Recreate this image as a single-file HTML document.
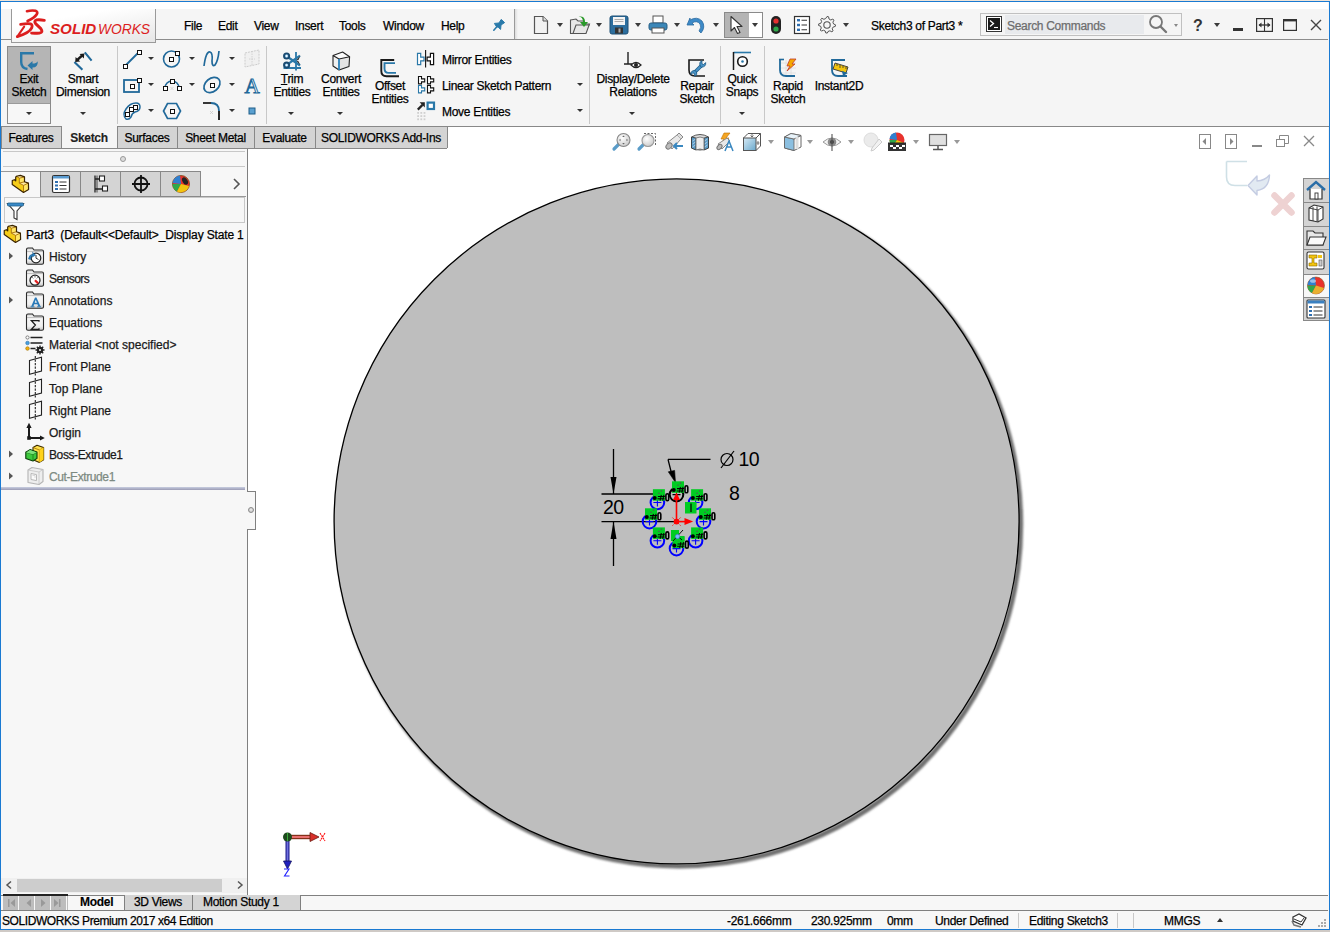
<!DOCTYPE html>
<html><head><meta charset="utf-8">
<style>
*{margin:0;padding:0;box-sizing:border-box}
html,body{width:1330px;height:932px;overflow:hidden;background:#f5f5f5;font-family:"Liberation Sans",sans-serif;font-size:11px;color:#1a1a1a}
.a{position:absolute}
.t{position:absolute;white-space:nowrap;line-height:1;color:#000;-webkit-text-stroke:0.25px currentColor}
.dd{position:absolute;width:0;height:0;border-left:3.5px solid transparent;border-right:3.5px solid transparent;border-top:4px solid #3a3a3a}
.sep{position:absolute;width:1px;background:#c8c8c8}
svg{position:absolute;overflow:visible}
</style></head><body>
<!-- window frame -->
<div class="a" style="left:0;top:0;width:1330px;height:1px;background:#efe4d8"></div>
<div class="a" style="left:0;top:930px;width:1330px;height:2px;background:#cfcac6"></div>
<div class="a" style="left:0;top:1px;width:1330px;height:929px;border:1px solid #1a7ad2"></div>
<!-- title bar -->
<div class="a" style="left:1px;top:2px;width:1327px;height:7px;background:#fff"></div>
<div class="a" style="left:1px;top:39px;width:1327px;height:1px;background:#8c8c8c"></div>

<!-- logo -->
<div class="a" style="left:11px;top:9px;width:145px;height:34px;border:1px solid #9a9a9a;border-top:none;background:linear-gradient(170deg,#ffffff 30%,#e6e6e6 100%)"></div>
<svg style="left:0;top:0" width="160" height="45" viewBox="0 0 160 45">
<g fill="none" stroke="#dc1e1e" stroke-linecap="round" stroke-linejoin="round">
<path d="M27 11.2 Q32 10 35.5 10.8 Q38.2 11.8 36.8 14.3 Q34.5 17.8 27.6 21" stroke-width="2.7"/>
<path d="M20.6 24.4 Q27.5 23.3 30.6 23.9 Q33 24.8 31.6 28.2 Q29.3 33 17.3 36.6" stroke-width="2.8"/>
<path d="M24.2 26.6 L17.3 36.6" stroke-width="2"/>
<path d="M44.3 20.4 Q39.5 19.3 36.6 19.9 Q33.6 20.8 35.6 23.6 L40.8 28.6 Q43.6 32.6 39.6 33 Q35.5 33.3 31.6 33.1" stroke-width="2.9"/>
</g>
<text x="50" y="33.6" font-family="Liberation Sans" font-weight="bold" font-style="italic" font-size="14.6" fill="#dc1e1e" textLength="46.3" lengthAdjust="spacingAndGlyphs">SOLID</text>
<text x="97.9" y="33.6" font-family="Liberation Sans" font-style="italic" font-size="14.6" fill="#dc1e1e" textLength="52.2" lengthAdjust="spacingAndGlyphs">WORKS</text>
</svg>
<!-- menu -->
<div class="t" style="left:184px;top:20px;font-size:12px;letter-spacing:-0.3px">File</div>
<div class="t" style="left:218px;top:20px;font-size:12px;letter-spacing:-0.3px">Edit</div>
<div class="t" style="left:254px;top:20px;font-size:12px;letter-spacing:-0.3px">View</div>
<div class="t" style="left:295px;top:20px;font-size:12px;letter-spacing:-0.3px">Insert</div>
<div class="t" style="left:339px;top:20px;font-size:12px;letter-spacing:-0.3px">Tools</div>
<div class="t" style="left:383px;top:20px;font-size:12px;letter-spacing:-0.3px">Window</div>
<div class="t" style="left:441px;top:20px;font-size:12px;letter-spacing:-0.3px">Help</div>
<svg style="left:490px;top:17px" width="16" height="16" viewBox="0 0 16 16"><path d="M11.2 2.4 L14.6 5.6 L11 8 L10.6 12.4 L8.2 10.2 L6.4 9.6 L4.4 6.4 L9 6Z" fill="#2a7aaa" stroke="#2a7aaa" stroke-width="1" stroke-linejoin="round"/><path d="M7.5 9 L3.8 13.2" stroke="#2a7aaa" stroke-width="1.6" stroke-linecap="round"/></svg>
<div class="a" style="left:514px;top:9px;width:4px;height:30px;background:linear-gradient(90deg,#9a9a9a 0,#9a9a9a 1px,#dcdcdc 1px,#f5f5f5 4px)"></div>
<!-- quick access icons -->
<svg style="left:533px;top:15px" width="16" height="20" viewBox="0 0 16 20"><path d="M1.5 1.5 H10 L14.5 6 V18.5 H1.5 Z" fill="#f2f2f2" stroke="#555" stroke-width="1.2"/><path d="M10 1.5 V6 H14.5" fill="#ddd" stroke="#555" stroke-width="1"/></svg>
<div class="dd" style="left:557px;top:23px"></div>
<svg style="left:569px;top:15px" width="22" height="20" viewBox="0 0 22 20"><path d="M1.5 5 L7 4 L9 6 L15 6 L16 9 L20.5 9 L17 18.5 H1.5 Z" fill="#e8e8e8" stroke="#555" stroke-width="1.1"/><path d="M4 18.5 L7 10 H20.5" fill="none" stroke="#555" stroke-width="1.1"/><path d="M8 2 Q14 1 14 7 L11 7 L15 12 L19 7 L16 7 Q16 0 8 2Z" fill="#2a9a2a"/></svg>
<div class="dd" style="left:596px;top:23px"></div>
<svg style="left:609px;top:15px" width="20" height="20" viewBox="0 0 20 20"><rect x="1" y="1" width="18" height="18" rx="2" fill="#2c6e9e" stroke="#1d4f74" stroke-width="1"/><rect x="4" y="2" width="12" height="8" fill="#f4f4f4"/><path d="M5.5 4.5h9M5.5 6.5h9" stroke="#999" stroke-width="0.8"/><rect x="6" y="12.5" width="8" height="6" fill="#333"/><rect x="9.5" y="13.5" width="2" height="4" fill="#aaa"/></svg>
<div class="dd" style="left:635px;top:23px"></div>
<svg style="left:648px;top:15px" width="20" height="20" viewBox="0 0 20 20"><rect x="5" y="1" width="10" height="7" fill="#fff" stroke="#555" stroke-width="1"/><rect x="1" y="8" width="18" height="7" rx="2" fill="#3b87b8" stroke="#285f85" stroke-width="1"/><rect x="4" y="13" width="12" height="5" fill="#fff" stroke="#555" stroke-width="1"/></svg>
<div class="dd" style="left:674px;top:23px"></div>
<svg style="left:686px;top:15px" width="20" height="20" viewBox="0 0 20 20"><path d="M4 3 L1 10 L8 10 L6 8 Q11 5 14 9 Q16 12 13 16 L15 18 Q20 12 16 6 Q11 1 4 5 Z" fill="#3d8ac8" stroke="#2a6aa0" stroke-width="0.8"/></svg>
<div class="dd" style="left:713px;top:23px"></div>
<div class="a" style="left:724px;top:12px;width:39px;height:26px;border:1px solid #8a8a8a;background:#fff"></div>
<div class="a" style="left:725px;top:13px;width:24px;height:24px;background:#b4b4b4"></div>
<svg style="left:729px;top:15px" width="16" height="20" viewBox="0 0 16 20"><path d="M2 1.5 L2 16 L5.5 12.5 L8.5 18.5 L11 17.5 L8 11.5 L13 11.5 Z" fill="#fff" stroke="#333" stroke-width="1.1" stroke-linejoin="round"/></svg>
<div class="dd" style="left:752px;top:23px"></div>
<svg style="left:769px;top:15px" width="14" height="20" viewBox="0 0 14 20"><rect x="2" y="1" width="10" height="18" rx="5" fill="#222"/><circle cx="7" cy="6" r="2.6" fill="#e53030"/><circle cx="7" cy="14" r="2.6" fill="#2ea84a"/></svg>
<svg style="left:793px;top:15px" width="18" height="20" viewBox="0 0 18 20"><rect x="1.5" y="1.5" width="15" height="17" fill="#fff" stroke="#333" stroke-width="1.2"/><rect x="4" y="4" width="3" height="2.4" fill="#2f6fb0"/><rect x="4" y="8.8" width="3" height="2.4" fill="#2f6fb0"/><rect x="4" y="13.6" width="3" height="2.4" fill="#2f6fb0"/><path d="M8.5 5.2h5.5M8.5 10h5.5M8.5 14.8h5.5" stroke="#333" stroke-width="1.1"/></svg>
<svg style="left:818px;top:16px" width="18" height="18" viewBox="0 0 18 18"><path d="M9 1.5 L10.6 1.8 L11 4 L12.8 5 L14.8 4 L15.9 5.2 L14.9 7.2 L15.6 9 L17.5 9.8 L17.3 11.4 L15.2 12 L14.2 13.8 L15.1 15.8 L13.9 16.8 L11.9 15.8 L10 16.5 L9.4 18 L7.8 18 L7.2 16 L5.4 15.2 L3.4 16.1 L2.3 15 L3.3 13 L2.6 11.2 L0.6 10.5 L0.7 8.9 L2.8 8.3 L3.6 6.4 L2.7 4.4 L3.9 3.3 L5.9 4.3 L7.7 3.5 Z" transform="translate(0,-1)" fill="none" stroke="#555" stroke-width="1"/><circle cx="9" cy="9" r="3.2" fill="none" stroke="#555" stroke-width="1.1"/></svg>
<div class="dd" style="left:843px;top:23px"></div>
<div class="t" style="left:871px;top:20px;font-size:12px;letter-spacing:-0.3px">Sketch3 of Part3 *</div>
<!-- search -->
<div class="a" style="left:980px;top:13px;width:202px;height:23px;border:1px solid #c0c0c0;background:#f5f5f5"></div>
<div class="a" style="left:1005px;top:15px;width:139px;height:19px;background:#e8eaed"></div>
<svg style="left:986px;top:16px" width="16" height="16" viewBox="0 0 16 16"><rect x="0.5" y="0.5" width="15" height="15" fill="#fff" stroke="#333"/><rect x="2" y="2" width="12" height="12" fill="#1a1a1a"/><path d="M4 4.5 L7.5 7.5 L4 10.5" fill="none" stroke="#fff" stroke-width="1.3"/><path d="M8 11.5h4" stroke="#fff" stroke-width="1.1"/></svg>
<div class="t" style="left:1007px;top:20px;font-size:12px;letter-spacing:-0.3px;color:#6d6d6d">Search Commands</div>
<svg style="left:1148px;top:14px" width="20" height="20" viewBox="0 0 20 20"><circle cx="8" cy="8" r="6" fill="none" stroke="#777" stroke-width="1.8"/><path d="M12.5 12.5 L18 18" stroke="#777" stroke-width="2.4" stroke-linecap="round"/></svg>
<div class="a" style="left:1174px;top:24px;width:0;height:0;border-left:2.5px solid transparent;border-right:2.5px solid transparent;border-top:3px solid #888"></div>
<div class="t" style="left:1193px;top:18px;font-size:16px;font-weight:bold;color:#333;-webkit-text-stroke:0">?</div>
<div class="dd" style="left:1214px;top:23px"></div>
<div class="a" style="left:1233px;top:28px;width:10px;height:3px;background:#333"></div>
<svg style="left:1256px;top:18px" width="17" height="14" viewBox="0 0 17 14"><rect x="0.6" y="0.6" width="15.8" height="12.8" fill="none" stroke="#333" stroke-width="1.2"/><path d="M8.5 1v12" stroke="#333" stroke-width="1.1"/><path d="M3 7h11" stroke="#333" stroke-width="1.3"/><path d="M2.5 7 L5.5 4.5 V9.5Z M14.5 7 L11.5 4.5 V9.5Z" fill="#333"/></svg>
<svg style="left:1283px;top:19px" width="14" height="12" viewBox="0 0 14 12"><rect x="0.6" y="0.6" width="12.8" height="10.8" fill="none" stroke="#333" stroke-width="1.2"/><rect x="0" y="0" width="14" height="2.4" fill="#333"/></svg>
<svg style="left:1310px;top:19px" width="12" height="12" viewBox="0 0 12 12"><path d="M1 1L11 11M11 1L1 11" stroke="#444" stroke-width="1.4"/></svg>

<!-- ribbon -->
<div class="a" style="left:7px;top:46px;width:44px;height:78px;border:1px solid #8a8a8a;background:#f7f7f7"></div>
<div class="a" style="left:8px;top:47px;width:42px;height:57px;background:#b5b5b5;border-bottom:1px solid #9a9a9a"></div>
<svg style="left:19px;top:51px" width="20" height="20" viewBox="0 0 20 20"><path d="M15 2.2 H2.2 V11 Q2.2 17 8.5 18" fill="none" stroke="#2a78a8" stroke-width="2.4"/><path d="M8.5 14.5 L13.5 10 L13.5 12.5 Q17.5 12.5 18.8 10.2 Q19 16.5 13.5 16.5 L13.5 19 Z" fill="#2a78a8"/></svg>
<div class="t" style="left:-31px;top:73px;width:120px;text-align:center;font-size:12px;letter-spacing:-0.3px">Exit</div>
<div class="t" style="left:-31px;top:86px;width:120px;text-align:center;font-size:12px;letter-spacing:-0.3px">Sketch</div>
<div class="dd" style="left:26px;top:112px;border-left-width:3px;border-right-width:3px;border-top-width:3.5px;border-top-color:#333"></div>
<svg style="left:73px;top:51px" width="20" height="20" viewBox="0 0 20 20"><path d="M11.8 1.4 L18.6 9.6 M1.4 11 L9.4 18.8" stroke="#21699a" stroke-width="2.1"/><path d="M4.6 8.6 L9 4.6" stroke="#1a1a1a" stroke-width="2.6"/><path d="M2.2 11 L2.6 6 L7.2 10.4Z M11.4 2.6 L6.6 3 L10.8 7.4Z" fill="#1a1a1a"/></svg>
<div class="t" style="left:23px;top:73px;width:120px;text-align:center;font-size:12px;letter-spacing:-0.3px">Smart</div>
<div class="t" style="left:23px;top:86px;width:120px;text-align:center;font-size:12px;letter-spacing:-0.3px">Dimension</div>
<div class="dd" style="left:80px;top:112px;border-left-width:3px;border-right-width:3px;border-top-width:3.5px;border-top-color:#333"></div>
<div class="sep" style="left:117px;top:46px;height:78px"></div>
<svg style="left:122px;top:49px" width="20" height="20" viewBox="0 0 20 20"><path d="M3 17 L17 3" stroke="#21699a" stroke-width="1.8"/><rect x="1.5" y="15.5" width="4" height="4" fill="#fff" stroke="#111" stroke-width="1"/><rect x="15.5" y="1.5" width="4" height="4" fill="#fff" stroke="#111" stroke-width="1"/></svg>
<svg style="left:162px;top:49px" width="20" height="20" viewBox="0 0 20 20"><circle cx="9.5" cy="10" r="8" fill="none" stroke="#21699a" stroke-width="1.6"/><rect x="7.5" y="8.5" width="4" height="4" fill="#fff" stroke="#111" stroke-width="1"/><rect x="13.5" y="2.5" width="4" height="4" fill="#fff" stroke="#111" stroke-width="1"/></svg>
<svg style="left:202px;top:49px" width="20" height="20" viewBox="0 0 20 20"><path d="M2 17 Q4 2 8 3 Q11 4 10 12 Q10 18 13 16 Q16 12 17 2" fill="none" stroke="#21699a" stroke-width="1.7"/></svg>
<svg style="left:242px;top:49px" width="20" height="20" viewBox="0 0 20 20"><path d="M3 4 L17 1 L17 15 L3 18 Z" fill="#f0f0f0" stroke="#ccc" stroke-width="1" stroke-dasharray="2 1"/><path d="M10 2 V17 M7 10 h6" stroke="#ccc" stroke-width="0.8" stroke-dasharray="1.5 1"/></svg>
<svg style="left:122px;top:75px" width="20" height="20" viewBox="0 0 20 20"><rect x="2" y="5" width="15" height="12" fill="none" stroke="#21699a" stroke-width="1.8"/><rect x="8.5" y="9.5" width="4" height="4" fill="#fff" stroke="#111" stroke-width="1"/><rect x="15.5" y="3.5" width="4" height="4" fill="#fff" stroke="#111" stroke-width="1"/></svg>
<svg style="left:162px;top:75px" width="20" height="20" viewBox="0 0 20 20"><path d="M3 13 A7 7 0 0 1 17 13" fill="none" stroke="#21699a" stroke-width="1.6"/><rect x="8.5" y="4.5" width="4" height="4" fill="#fff" stroke="#111" stroke-width="1"/><rect x="1.5" y="11.5" width="4" height="4" fill="#fff" stroke="#111" stroke-width="1"/><rect x="15.5" y="11.5" width="4" height="4" fill="#fff" stroke="#111" stroke-width="1"/><path d="M8.5 12 l3 3 M11.5 12 l-3 3" stroke="#ccc" stroke-width="0.8"/></svg>
<svg style="left:202px;top:75px" width="20" height="20" viewBox="0 0 20 20"><ellipse cx="10" cy="10" rx="9" ry="6.5" transform="rotate(-40 10 10)" fill="none" stroke="#21699a" stroke-width="1.7"/><rect x="8.5" y="8.5" width="4" height="4" fill="#fff" stroke="#111" stroke-width="1"/></svg>
<svg style="left:242px;top:75px" width="20" height="20" viewBox="0 0 20 20"><text x="10" y="17.6" font-family="Liberation Serif" font-size="21" text-anchor="middle" fill="#fff" stroke="#21699a" stroke-width="1">A</text></svg>
<svg style="left:122px;top:101px" width="20" height="20" viewBox="0 0 20 20"><path d="M4 18 Q0 14 4 8 Q8 2 14 2 Q18 2 18 6 Q18 10 13 11 Q10 12 9 16 Q7 19 4 18Z" fill="none" stroke="#21699a" stroke-width="1.5"/><rect x="3.5" y="11.5" width="4" height="4" fill="#fff" stroke="#111" stroke-width="1"/><rect x="7.5" y="6.5" width="4" height="4" fill="#fff" stroke="#111" stroke-width="1"/><rect x="11.5" y="4.5" width="4" height="4" fill="#fff" stroke="#111" stroke-width="1"/></svg>
<svg style="left:162px;top:101px" width="20" height="20" viewBox="0 0 20 20"><path d="M5.5 2.5 H14.5 L18.5 10 L14.5 17.5 H5.5 L1.5 10 Z" fill="none" stroke="#21699a" stroke-width="1.7"/><rect x="8.5" y="8.5" width="4" height="4" fill="#fff" stroke="#111" stroke-width="1"/></svg>
<svg style="left:202px;top:101px" width="20" height="20" viewBox="0 0 20 20"><path d="M1 2 H9" stroke="#222" stroke-width="1.8"/><path d="M9 2 Q17 2 17 10" fill="none" stroke="#21699a" stroke-width="1.8"/><path d="M17 10 V19" stroke="#111" stroke-width="1.8"/><path d="M8 10 l3 3 M11 10 l-3 3" stroke="#ccc" stroke-width="0.8"/></svg>
<svg style="left:242px;top:101px" width="20" height="20" viewBox="0 0 20 20"><rect x="7" y="7" width="6" height="6" fill="#5aa0d0" stroke="#1f5f8a" stroke-width="1"/></svg>
<div class="dd" style="left:148px;top:57px;border-left-width:3px;border-right-width:3px;border-top-width:3.5px;border-top-color:#333"></div>
<div class="dd" style="left:189px;top:57px;border-left-width:3px;border-right-width:3px;border-top-width:3.5px;border-top-color:#333"></div>
<div class="dd" style="left:229px;top:57px;border-left-width:3px;border-right-width:3px;border-top-width:3.5px;border-top-color:#333"></div>
<div class="dd" style="left:148px;top:83px;border-left-width:3px;border-right-width:3px;border-top-width:3.5px;border-top-color:#333"></div>
<div class="dd" style="left:189px;top:83px;border-left-width:3px;border-right-width:3px;border-top-width:3.5px;border-top-color:#333"></div>
<div class="dd" style="left:229px;top:83px;border-left-width:3px;border-right-width:3px;border-top-width:3.5px;border-top-color:#333"></div>
<div class="dd" style="left:148px;top:109px;border-left-width:3px;border-right-width:3px;border-top-width:3.5px;border-top-color:#333"></div>
<div class="dd" style="left:229px;top:109px;border-left-width:3px;border-right-width:3px;border-top-width:3.5px;border-top-color:#333"></div>
<div class="sep" style="left:266px;top:46px;height:78px"></div>
<svg style="left:282px;top:51px" width="20" height="20" viewBox="0 0 20 20"><path d="M6.5 6.5 L18 14.5 M6.5 12.6 L18 4.6" stroke="#2a78a8" stroke-width="2.2"/><path d="M14 9.6 L18.5 4.5 L16.5 9Z M14 9.6 L18.5 14.6 L16.5 10.2Z" fill="#333"/><path d="M14 1 V19.5 M1.5 17 H19" stroke="#2a78a8" stroke-width="1.8"/><circle cx="4.6" cy="5" r="2.6" fill="#8ec4ea" stroke="#1a4a70" stroke-width="1.9"/><circle cx="4.6" cy="14.1" r="2.6" fill="#8ec4ea" stroke="#1a4a70" stroke-width="1.9"/><circle cx="4.6" cy="5" r="0.9" fill="#fff"/><circle cx="4.6" cy="14.1" r="0.9" fill="#fff"/></svg>
<div class="t" style="left:232px;top:73px;width:120px;text-align:center;font-size:12px;letter-spacing:-0.3px"><u style="text-decoration-thickness:1px">T</u>rim</div>
<div class="t" style="left:232px;top:86px;width:120px;text-align:center;font-size:12px;letter-spacing:-0.3px">Entities</div>
<div class="dd" style="left:288px;top:112px;border-left-width:3px;border-right-width:3px;border-top-width:3.5px;border-top-color:#333"></div>
<svg style="left:331px;top:51px" width="20" height="20" viewBox="0 0 20 20"><path d="M11.6 1 L2 4.5 L2 15 L8 19 L18 15.5 L18.6 5.8Z" fill="#f0f0f0"/><path d="M11.6 1 L2 4.5 L8 8 L18.6 5.8Z" fill="#fafafa"/><path d="M8 8 L18.6 5.8 L18 15.5 L8 19Z" fill="#e4e4e4"/><path d="M11.6 1 L2 4.5 L2 15 L8 19 L18 15.5 L18.6 5.8Z M2 4.5 L8 8 L18.6 5.8" fill="none" stroke="#222" stroke-width="1.1" stroke-linejoin="round"/><path d="M8 8 V19" stroke="#2a80b8" stroke-width="1.8"/></svg>
<div class="t" style="left:281px;top:73px;width:120px;text-align:center;font-size:12px;letter-spacing:-0.3px">Convert</div>
<div class="t" style="left:281px;top:86px;width:120px;text-align:center;font-size:12px;letter-spacing:-0.3px">Entities</div>
<div class="dd" style="left:337px;top:112px;border-left-width:3px;border-right-width:3px;border-top-width:3.5px;border-top-color:#333"></div>
<svg style="left:380px;top:58px" width="20" height="20" viewBox="0 0 20 20"><path d="M14.2 2 H1.3 V13 Q1.3 18.2 6.5 18.2 H19" fill="none" stroke="#1a1a1a" stroke-width="1.9"/><path d="M15 5.1 H4.5 V10.5 Q4.5 14.9 8.5 14.9 H16" fill="none" stroke="#2a78a8" stroke-width="1.9"/></svg>
<div class="t" style="left:330px;top:80px;width:120px;text-align:center;font-size:12px;letter-spacing:-0.3px">Offset</div>
<div class="t" style="left:330px;top:93px;width:120px;text-align:center;font-size:12px;letter-spacing:-0.3px">Entities</div>
<svg style="left:416px;top:50px" width="20" height="20" viewBox="0 0 20 20"><path transform="translate(1.5 3.4)" d="M0 0 H3.2 V3.8 H6.5 V7.4 H3.2 V11.2 H0Z" fill="#fff" stroke="#2a78a8" stroke-width="1.2"/><path d="M9.6 0 V17.5" stroke="#111" stroke-width="1.1"/><path transform="translate(17.6 3.4) scale(-1 1)" d="M0 0 H3.2 V3.8 H6.5 V7.4 H3.2 V11.2 H0Z" fill="#fff" stroke="#111" stroke-width="1.2"/></svg>
<div class="t" style="left:442px;top:54px;font-size:12px;letter-spacing:-0.3px">Mirror Entities</div>
<svg style="left:416px;top:75px" width="20" height="20" viewBox="0 0 20 20"><path transform="translate(2.5 1.5)" d="M0 0 H3 V2.4 H6.2 V5.4 H3 V7.4 H0Z" fill="#fff" stroke="#111" stroke-width="1.1"/><path transform="translate(11.5 1.5)" d="M0 0 H3 V2.4 H6.2 V5.4 H3 V7.4 H0Z" fill="#fff" stroke="#111" stroke-width="1.1"/><path transform="translate(2.5 10.5)" d="M0 0 H3 V2.4 H6.2 V5.4 H3 V7.4 H0Z" fill="#fff" stroke="#2a78a8" stroke-width="1.1"/><path transform="translate(11.5 10.5)" d="M0 0 H3 V2.4 H6.2 V5.4 H3 V7.4 H0Z" fill="#fff" stroke="#111" stroke-width="1.1"/></svg>
<div class="t" style="left:442px;top:80px;font-size:12px;letter-spacing:-0.3px">Linear Sketch Pattern</div>
<svg style="left:416px;top:101px" width="20" height="20" viewBox="0 0 20 20"><path d="M1.8 8.6 L6.5 3.9" stroke="#222" stroke-width="2.2"/><path d="M3.6 1.2 H8.8 V6.4Z" fill="#222"/><rect x="11.6" y="1.6" width="6.4" height="6.4" fill="#fff" stroke="#2a78a8" stroke-width="2.2"/><g fill="#d0d0d0"><rect x="1.2" y="11" width="1.8" height="1.8"/><rect x="4.4" y="11" width="1.8" height="1.8"/><rect x="7.6" y="11" width="1.8" height="1.8"/><rect x="1.2" y="14.2" width="1.8" height="1.8"/><rect x="4.4" y="14.2" width="1.8" height="1.8"/><rect x="7.6" y="14.2" width="1.8" height="1.8"/><rect x="1.2" y="17.4" width="1.8" height="1.8"/><rect x="4.4" y="17.4" width="1.8" height="1.8"/><rect x="7.6" y="17.4" width="1.8" height="1.8"/></g></svg>
<div class="t" style="left:442px;top:106px;font-size:12px;letter-spacing:-0.3px">Move Entities</div>
<div class="dd" style="left:577px;top:83px;border-left-width:3px;border-right-width:3px;border-top-width:3.5px;border-top-color:#333"></div>
<div class="dd" style="left:577px;top:109px;border-left-width:3px;border-right-width:3px;border-top-width:3.5px;border-top-color:#333"></div>
<div class="sep" style="left:589px;top:46px;height:78px"></div>
<svg style="left:623px;top:51px" width="20" height="20" viewBox="0 0 20 20"><path d="M5 1 V13 M1 13 H9" stroke="#222" stroke-width="1.4"/><path d="M8 14 Q13 9 18 14 Q13 19 8 14Z" fill="#fff" stroke="#222" stroke-width="1.2"/><circle cx="13" cy="14" r="2" fill="#222"/></svg>
<div class="t" style="left:573px;top:73px;width:120px;text-align:center;font-size:12px;letter-spacing:-0.3px">Display/Delete</div>
<div class="t" style="left:573px;top:86px;width:120px;text-align:center;font-size:12px;letter-spacing:-0.3px">Relations</div>
<div class="dd" style="left:629px;top:112px;border-left-width:3px;border-right-width:3px;border-top-width:3.5px;border-top-color:#333"></div>
<svg style="left:687px;top:58px" width="20" height="20" viewBox="0 0 20 20"><path d="M17 2 H2 V12 Q2 18 8 18 H18" fill="none" stroke="#1a1a1a" stroke-width="1.6"/><path d="M8.5 13.5 L14 8" stroke="#1f5f8a" stroke-width="3.6" stroke-linecap="round"/><path d="M8.5 13.5 L14 8" stroke="#4a94c8" stroke-width="2" stroke-linecap="round"/><path d="M13.5 8.5 Q11.5 4 15 2.8 L14.8 5.6 L16.6 6.6 L18.6 4.6 Q19.4 8.6 14.5 9.2Z" fill="#4a94c8" stroke="#1f5f8a" stroke-width="0.9"/><path d="M9 13 Q11 17.5 7.5 18 L7.8 15.8 L5.8 14.8 L4 16.6 Q3.4 12.5 8 12.5Z" fill="#4a94c8" stroke="#1f5f8a" stroke-width="0.9"/></svg>
<div class="t" style="left:637px;top:80px;width:120px;text-align:center;font-size:12px;letter-spacing:-0.3px">Repair</div>
<div class="t" style="left:637px;top:93px;width:120px;text-align:center;font-size:12px;letter-spacing:-0.3px">Sketch</div>
<div class="sep" style="left:720px;top:46px;height:78px"></div>
<svg style="left:732px;top:51px" width="20" height="20" viewBox="0 0 20 20"><path d="M1.5 1.5 H19" stroke="#2a78a8" stroke-width="1.6"/><path d="M1.5 1 V19" stroke="#1a1a1a" stroke-width="1.5"/><circle cx="10.5" cy="10.5" r="4.8" fill="#fff" stroke="#1a1a1a" stroke-width="1.6"/><circle cx="10.5" cy="10.5" r="1.3" fill="#2a78a8"/></svg>
<div class="t" style="left:682px;top:73px;width:120px;text-align:center;font-size:12px;letter-spacing:-0.3px">Quick</div>
<div class="t" style="left:682px;top:86px;width:120px;text-align:center;font-size:12px;letter-spacing:-0.3px">Snaps</div>
<div class="dd" style="left:739px;top:112px;border-left-width:3px;border-right-width:3px;border-top-width:3.5px;border-top-color:#333"></div>
<div class="sep" style="left:764px;top:46px;height:78px"></div>
<svg style="left:778px;top:58px" width="20" height="20" viewBox="0 0 20 20"><path d="M3 5h15M3 10h15M3 15h15M8 2v16M13 2v16" stroke="#ddd" stroke-width="0.8"/><path d="M2 2 V12 Q2 18 8 18 H17" fill="none" stroke="#21699a" stroke-width="1.8"/><path d="M1 1.5 H6" stroke="#21699a" stroke-width="1.6"/><path d="M12 1 L18 1 L14 6 L17 6 L9 13 L12 8 L9 8 Z" fill="#f5a800" stroke="#c0392b" stroke-width="0.8"/></svg>
<div class="t" style="left:728px;top:80px;width:120px;text-align:center;font-size:12px;letter-spacing:-0.3px">Rapid</div>
<div class="t" style="left:728px;top:93px;width:120px;text-align:center;font-size:12px;letter-spacing:-0.3px">Sketch</div>
<svg style="left:830px;top:58px" width="20" height="20" viewBox="0 0 20 20"><path d="M15 2 H2 V12 Q2 18 8 18 H17" fill="none" stroke="#21699a" stroke-width="1.8"/><path d="M5 5 L18 9 L16 15 L3 11Z" fill="#f1c40f" stroke="#333" stroke-width="0.9"/><path d="M7 6v2M10 7v3M13 8v2M16 9v2" stroke="#333" stroke-width="0.8"/><path d="M12 13 L18 15 L13 18Z" fill="#21699a"/></svg>
<div class="t" style="left:779px;top:80px;width:120px;text-align:center;font-size:12px;letter-spacing:-0.3px">Instant2D</div>
<!-- ribbon bottom -->
<div class="a" style="left:1px;top:126px;width:1328px;height:1px;background:#888"></div>
<div class="a" style="left:248px;top:127px;width:1080px;height:766px;background:#fff"></div>
<div class="a" style="left:1px;top:127px;width:247px;height:22px;background:#f5f5f5"></div>
<div class="a" style="left:1px;top:148px;width:446px;height:1px;background:#888"></div>
<div class="a" style="left:1px;top:127px;width:61px;height:21px;background:#d4d4d4;border-left:1px solid #888;border-right:1px solid #888"></div>
<div class="t" style="left:1px;top:132px;width:60px;text-align:center;font-size:12px;letter-spacing:-0.3px">Features</div>
<div class="a" style="left:61px;top:126px;width:57px;height:22px;background:#f5f5f5;border-left:1px solid #888;border-right:1px solid #888"></div>
<div class="t" style="left:61px;top:132px;width:56px;text-align:center;font-weight:bold;-webkit-text-stroke:0.12px currentColor;font-size:12px;letter-spacing:-0.3px;color:#222">Sketch</div>
<div class="a" style="left:117px;top:127px;width:61px;height:21px;background:#d4d4d4;border-left:1px solid #888;border-right:1px solid #888"></div>
<div class="t" style="left:117px;top:132px;width:60px;text-align:center;font-size:12px;letter-spacing:-0.3px">Surfaces</div>
<div class="a" style="left:177px;top:127px;width:78px;height:21px;background:#d4d4d4;border-left:1px solid #888;border-right:1px solid #888"></div>
<div class="t" style="left:177px;top:132px;width:77px;text-align:center;font-size:12px;letter-spacing:-0.3px">Sheet Metal</div>
<div class="a" style="left:254px;top:127px;width:62px;height:21px;background:#d4d4d4;border-left:1px solid #888;border-right:1px solid #888"></div>
<div class="t" style="left:254px;top:132px;width:61px;text-align:center;font-size:12px;letter-spacing:-0.3px">Evaluate</div>
<div class="a" style="left:315px;top:127px;width:133px;height:21px;background:#d4d4d4;border-left:1px solid #888;border-right:1px solid #888"></div>
<div class="t" style="left:315px;top:132px;width:132px;text-align:center;font-size:12px;letter-spacing:-0.3px">SOLIDWORKS Add-Ins</div>
<div class="a" style="left:1px;top:149px;width:246px;height:744px;background:#f7f7f7"></div>
<div class="a" style="left:3px;top:151px;width:242px;height:1px;background:#c8c8c8"></div>
<div class="a" style="left:120px;top:156px;width:6px;height:6px;border-radius:50%;border:1px solid #999;background:#ddd"></div>
<div class="a" style="left:3px;top:166px;width:242px;height:1px;background:#c8c8c8"></div>
<div class="a" style="left:1px;top:196px;width:245px;height:1px;background:#999"></div>
<div class="a" style="left:1px;top:171px;width:40px;height:26px;background:#f7f7f7;border-top:1px solid #999;border-right:1px solid #999"></div>
<div class="a" style="left:40px;top:171px;width:41px;height:26px;background:#d4d4d4;border:1px solid #888"></div>
<div class="a" style="left:80px;top:171px;width:41px;height:26px;background:#d4d4d4;border:1px solid #888"></div>
<div class="a" style="left:120px;top:171px;width:41px;height:26px;background:#d4d4d4;border:1px solid #888"></div>
<div class="a" style="left:160px;top:171px;width:41px;height:26px;background:#d4d4d4;border:1px solid #888"></div>
<svg style="left:11px;top:174px" width="20" height="20" viewBox="0 0 20 20"><path d="M1.25 6.5 L3.4 5.7 L4.7 6.9 V3.2 L5.5 2.25 L9.4 1.35 L13.5 2.9 V7.8 L17.4 9.1 L17.6 15.5 L12.5 18.4 L1.25 10.6Z" fill="#f5cc18"/><path d="M8.3 4.2 L13.5 2.9 V7.8 L8.3 9.1Z M12.5 11.4 L17.4 9.1 L17.6 15.5 L12.5 18.4Z" fill="#ffe566"/><path d="M5.5 2.25 L9.4 1.35 L13.5 2.9 L8.3 4.2Z M8.3 9.1 L13.5 7.8 L17.4 9.1 L12.5 11.4Z" fill="#ffeaa0"/><path d="M5.5 2.25 L8.3 4.2 L13.5 2.9 M8.3 4.2 V9.1 L12.5 11.4 V18.4 M12.5 11.4 L17.4 9.1 M8.3 9.1 L13.5 7.8" stroke="#a8700c" stroke-width="0.9" fill="none"/><path d="M1.25 6.5 L3.4 5.7 L4.7 6.9 V3.2 L5.5 2.25 L9.4 1.35 L13.5 2.9 V7.8 L17.4 9.1 L17.6 15.5 L12.5 18.4 L1.25 10.6Z" fill="none" stroke="#3a2400" stroke-width="1.2" stroke-linejoin="round"/></svg>
<svg style="left:51px;top:174px" width="20" height="20" viewBox="0 0 20 20"><rect x="1.5" y="1.5" width="17" height="17" rx="1.5" fill="#fff" stroke="#333" stroke-width="1.2"/><rect x="2" y="2" width="16" height="2.5" fill="#5a9bd0"/><rect x="4" y="7" width="3" height="2" fill="#2f6fb0"/><rect x="4" y="10.5" width="3" height="2" fill="#2f6fb0"/><rect x="4" y="14" width="3" height="2" fill="#2f6fb0"/><path d="M8.5 8h7M8.5 11.5h7M8.5 15h7" stroke="#333" stroke-width="1"/></svg>
<svg style="left:91px;top:174px" width="20" height="20" viewBox="0 0 20 20"><path d="M4 1.5 V18.5 M4 5 H10 M4 15 H12" stroke="#222" stroke-width="1.3" fill="none"/><rect x="8.5" y="2" width="5" height="5" fill="#fff" stroke="#222" stroke-width="1.1"/><rect x="11.5" y="12" width="5" height="5" fill="#fff" stroke="#222" stroke-width="1.1"/><path d="M6 1.5v17" stroke="#222" stroke-width="0.8"/></svg>
<svg style="left:131px;top:174px" width="20" height="20" viewBox="0 0 20 20"><circle cx="10" cy="10" r="6.5" fill="none" stroke="#111" stroke-width="1.8"/><path d="M10 1 V19 M1 10 H19" stroke="#111" stroke-width="1.8"/></svg>
<svg style="left:171px;top:174px" width="20" height="20" viewBox="0 0 20 20"><circle cx="10" cy="10" r="8.5" fill="#e8322d" stroke="#7a4a10" stroke-width="0.8"/><path d="M10 10 L1.5 9 A8.5 8.5 0 0 1 9 1.5Z" fill="#2f80d0"/><path d="M10 10 L1.5 10 A8.5 8.5 0 0 0 6 17.5Z" fill="#2fa84a"/><path d="M10 10 L6 17.5 A8.5 8.5 0 0 0 18 12 Z" fill="#f2c40f"/><ellipse cx="14" cy="7" rx="2.5" ry="4" transform="rotate(-30 14 7)" fill="#222"/></svg>
<svg style="left:232px;top:178px" width="10" height="12" viewBox="0 0 10 12"><path d="M2 1 L7 6 L2 11" fill="none" stroke="#555" stroke-width="1.6"/></svg>
<div class="a" style="left:4px;top:197px;width:241px;height:26px;border:1px solid #c8c8c8;background:#f7f7f7"></div>
<svg style="left:6px;top:201px" width="20" height="20" viewBox="0 0 20 20"><path d="M1.5 2.5 H17.5 L11 10 V18.5 L8 17 V10 Z" fill="#fff" stroke="#333" stroke-width="1.1"/><rect x="1.5" y="2" width="16" height="3" rx="1" fill="#3a8ac8" stroke="#1f5f8a" stroke-width="0.8"/></svg>
<svg style="left:3px;top:224px" width="20" height="20" viewBox="0 0 20 20"><path d="M1.25 6.5 L3.4 5.7 L4.7 6.9 V3.2 L5.5 2.25 L9.4 1.35 L13.5 2.9 V7.8 L17.4 9.1 L17.6 15.5 L12.5 18.4 L1.25 10.6Z" fill="#f5cc18"/><path d="M8.3 4.2 L13.5 2.9 V7.8 L8.3 9.1Z M12.5 11.4 L17.4 9.1 L17.6 15.5 L12.5 18.4Z" fill="#ffe566"/><path d="M5.5 2.25 L9.4 1.35 L13.5 2.9 L8.3 4.2Z M8.3 9.1 L13.5 7.8 L17.4 9.1 L12.5 11.4Z" fill="#ffeaa0"/><path d="M5.5 2.25 L8.3 4.2 L13.5 2.9 M8.3 4.2 V9.1 L12.5 11.4 V18.4 M12.5 11.4 L17.4 9.1 M8.3 9.1 L13.5 7.8" stroke="#a8700c" stroke-width="0.9" fill="none"/><path d="M1.25 6.5 L3.4 5.7 L4.7 6.9 V3.2 L5.5 2.25 L9.4 1.35 L13.5 2.9 V7.8 L17.4 9.1 L17.6 15.5 L12.5 18.4 L1.25 10.6Z" fill="none" stroke="#3a2400" stroke-width="1.2" stroke-linejoin="round"/></svg>
<div class="t" style="left:26px;top:229px;font-size:12px;letter-spacing:-0.15px">Part3&nbsp; (Default&lt;&lt;Default&gt;_Display State 1</div>
<svg style="left:8px;top:252px" width="6" height="8" viewBox="0 0 6 8"><path d="M1 0.5 L5 4 L1 7.5Z" fill="#555"/></svg>
<svg style="left:25px;top:247px" width="20" height="20" viewBox="0 0 20 20"><path d="M1.5 16 V2.5 Q1.5 1 3 1 H7.5 L9 3 H17 Q18.5 3 18.5 4.5 V16 Q18.5 17.2 17 17.2 H3 Q1.5 17.2 1.5 16Z" fill="url(#fgrad)" stroke="#2a2a2a" stroke-width="1.1"/><path d="M2 4.6 H18" stroke="#aaa" stroke-width="0.8"/><circle cx="11" cy="11" r="4.8" fill="#fff" stroke="#222" stroke-width="1.2"/><path d="M11 8V11.2L13.5 12.5" stroke="#222" stroke-width="0.9" fill="none"/><path d="M3.5 12 Q4 7.5 8 7 L7.5 5.2 L10.5 8 L7.2 10.2 L7.6 8.8 Q5.6 9.5 5.8 12.5Z" fill="#2a80c0" stroke="#1a5a8a" stroke-width="0.5"/></svg>
<div class="t" style="left:49px;top:251px;font-size:12px;letter-spacing:0px;color:#1a1a1a">History</div>
<svg style="left:25px;top:269px" width="20" height="20" viewBox="0 0 20 20"><path d="M1.5 16 V2.5 Q1.5 1 3 1 H7.5 L9 3 H17 Q18.5 3 18.5 4.5 V16 Q18.5 17.2 17 17.2 H3 Q1.5 17.2 1.5 16Z" fill="url(#fgrad)" stroke="#2a2a2a" stroke-width="1.1"/><path d="M2 4.6 H18" stroke="#aaa" stroke-width="0.8"/><circle cx="10" cy="11.2" r="5" fill="#fff" stroke="#222" stroke-width="1.3"/><path d="M10 11.2 L13.2 14.4" stroke="#e02020" stroke-width="2.2"/><path d="M7 8.2l1.2 1.2M13 8.2l-1.2 1.2M10 7v1.5" stroke="#333" stroke-width="0.8"/></svg>
<div class="t" style="left:49px;top:273px;font-size:12px;letter-spacing:-0.55px;color:#1a1a1a">Sensors</div>
<svg style="left:8px;top:296px" width="6" height="8" viewBox="0 0 6 8"><path d="M1 0.5 L5 4 L1 7.5Z" fill="#555"/></svg>
<svg style="left:25px;top:291px" width="20" height="20" viewBox="0 0 20 20"><path d="M1.5 16 V2.5 Q1.5 1 3 1 H7.5 L9 3 H17 Q18.5 3 18.5 4.5 V16 Q18.5 17.2 17 17.2 H3 Q1.5 17.2 1.5 16Z" fill="url(#fgrad)" stroke="#2a2a2a" stroke-width="1.1"/><path d="M2 4.6 H18" stroke="#aaa" stroke-width="0.8"/><path d="M10 6.5 L6.2 15.5 H8.4 L9.2 13.2 H12.4 L13.2 15.5 H15.6 L11.4 6.5Z M9.7 11.8 L10.8 8.8 L11.9 11.8Z" fill="#2a7ab8" fill-rule="evenodd"/><path d="M5.5 15.8h4M12 15.8h4" stroke="#2a7ab8" stroke-width="0.9"/></svg>
<div class="t" style="left:49px;top:295px;font-size:12px;letter-spacing:0px;color:#1a1a1a">Annotations</div>
<svg style="left:25px;top:313px" width="20" height="20" viewBox="0 0 20 20"><path d="M1.5 16 V2.5 Q1.5 1 3 1 H7.5 L9 3 H17 Q18.5 3 18.5 4.5 V16 Q18.5 17.2 17 17.2 H3 Q1.5 17.2 1.5 16Z" fill="url(#fgrad)" stroke="#2a2a2a" stroke-width="1.1"/><path d="M2 4.6 H18" stroke="#aaa" stroke-width="0.8"/><path d="M14 8.8 V7.6 H6.4 L10.4 12 L6.4 16.4 H14 V15.2" fill="none" stroke="#1a1a1a" stroke-width="1.3"/></svg>
<div class="t" style="left:49px;top:317px;font-size:12px;letter-spacing:0px;color:#1a1a1a">Equations</div>
<svg style="left:25px;top:336px" width="20" height="20" viewBox="0 0 20 20"><path d="M5.5 1.5h12M5.5 7h12M5.5 12.5h5" stroke="#222" stroke-width="1.5"/><circle cx="2.5" cy="1.5" r="1.6" fill="#fff" stroke="#666" stroke-width="0.8"/><circle cx="2.5" cy="7" r="1.8" fill="#4aa0e0" stroke="#2a70a8" stroke-width="0.6"/><circle cx="2.5" cy="12.5" r="1.8" fill="#f2b010" stroke="#a07000" stroke-width="0.6"/><circle cx="15" cy="14" r="3.2" fill="#222"/><path d="M15 9.5v9M10.5 14h9M11.8 10.8l6.4 6.4M18.2 10.8l-6.4 6.4" stroke="#222" stroke-width="1.4"/><circle cx="15" cy="14" r="1" fill="#fff"/></svg>
<div class="t" style="left:49px;top:339px;font-size:12px;letter-spacing:0px;color:#1a1a1a">Material &lt;not specified&gt;</div>
<svg style="left:25px;top:358px" width="20" height="20" viewBox="0 0 20 20"><path d="M4.5 2.5 L16.5 -0.8 V13 L4.5 16.3Z" fill="#fafafa" stroke="#222" stroke-width="1.1"/><path d="M10.3 -2v19.5" stroke="#222" stroke-width="1.1" stroke-dasharray="2.2 1.3"/></svg>
<div class="t" style="left:49px;top:361px;font-size:12px;letter-spacing:0px;color:#1a1a1a">Front Plane</div>
<svg style="left:25px;top:380px" width="20" height="20" viewBox="0 0 20 20"><path d="M4.5 2.5 L16.5 -0.8 V13 L4.5 16.3Z" fill="#fafafa" stroke="#222" stroke-width="1.1"/><path d="M10.3 -2v19.5" stroke="#222" stroke-width="1.1" stroke-dasharray="2.2 1.3"/></svg>
<div class="t" style="left:49px;top:383px;font-size:12px;letter-spacing:0px;color:#1a1a1a">Top Plane</div>
<svg style="left:25px;top:402px" width="20" height="20" viewBox="0 0 20 20"><path d="M4.5 2.5 L16.5 -0.8 V13 L4.5 16.3Z" fill="#fafafa" stroke="#222" stroke-width="1.1"/><path d="M10.3 -2v19.5" stroke="#222" stroke-width="1.1" stroke-dasharray="2.2 1.3"/></svg>
<div class="t" style="left:49px;top:405px;font-size:12px;letter-spacing:0px;color:#1a1a1a">Right Plane</div>
<svg style="left:25px;top:424px" width="20" height="20" viewBox="0 0 20 20"><path d="M4 2 V14 H16" fill="none" stroke="#1a1a1a" stroke-width="2"/><path d="M1.4 4 L4 -1.2 L6.6 4Z M15 11.4 L19.8 14 L15 16.6Z" fill="#1a1a1a"/><rect x="2.2" y="12.2" width="3.6" height="3.6" fill="#1a1a1a"/></svg>
<div class="t" style="left:49px;top:427px;font-size:12px;letter-spacing:0px;color:#1a1a1a">Origin</div>
<svg style="left:8px;top:450px" width="6" height="8" viewBox="0 0 6 8"><path d="M1 0.5 L5 4 L1 7.5Z" fill="#555"/></svg>
<svg style="left:25px;top:446px" width="20" height="20" viewBox="0 0 20 20"><path d="M8 1.5 L12 -0.8 L18.6 1.6 L18.6 13.8 L14.4 16.4 L8 13.8Z" fill="#ffe04a" stroke="#3a2a00" stroke-width="1.1" stroke-linejoin="round"/><path d="M8 1.5 L14.4 4 L18.6 1.6 M14.4 4 V16.4" fill="none" stroke="#a07000" stroke-width="0.8"/><path d="M14.4 4 L18.6 1.6 L18.6 13.8 L14.4 16.4Z" fill="#ffd21a"/><path d="M0.8 6.2 L5 3.6 L12 6 L12 12.4 L8 15 L0.8 12.6Z" fill="#3cc83c" stroke="#0a3a0a" stroke-width="1.1" stroke-linejoin="round"/><path d="M0.8 6.2 L8 8.6 L12 6 M8 8.6 V15" fill="none" stroke="#1a7a1a" stroke-width="0.8"/><path d="M1.2 6.6 L5 4 L11.4 6.2 L8 8.3Z" fill="#7ae07a"/></svg>
<div class="t" style="left:49px;top:449px;font-size:12px;letter-spacing:-0.4px;color:#1a1a1a">Boss-Extrude1</div>
<svg style="left:8px;top:472px" width="6" height="8" viewBox="0 0 6 8"><path d="M1 0.5 L5 4 L1 7.5Z" fill="#555"/></svg>
<svg style="left:25px;top:468px" width="20" height="20" viewBox="0 0 20 20"><path d="M3 2 L7 -0.5 L18 1.5 L18 13.5 L14 16.5 L3 14.5Z" fill="#eee" stroke="#b4b4b4" stroke-width="1.1" stroke-linejoin="round"/><path d="M3 2 L14 4 L18 1.5 M14 4 V16.5" fill="none" stroke="#c4c4c4" stroke-width="0.8"/><path d="M6 5.5 L11.5 6.6 V12.6 L6 11.5Z" fill="#fafafa" stroke="#b8b8b8" stroke-width="1"/><path d="M7.5 7.5 h2.5 v2.5" fill="none" stroke="#ccc" stroke-width="0.7"/></svg>
<div class="t" style="left:49px;top:471px;font-size:12px;letter-spacing:-0.4px;color:#7d8a82">Cut-Extrude1</div>
<div class="a" style="left:1px;top:487px;width:244px;height:3px;background:linear-gradient(#c8cee0,#9a9ab4)"></div>
<div class="a" style="left:247px;top:149px;width:1px;height:343px;background:#808080"></div>
<div class="a" style="left:247px;top:529px;width:1px;height:367px;background:#808080"></div>
<div class="a" style="left:247px;top:491px;width:9px;height:39px;border:1px solid #808080;border-left:none;background:#f7f7f7"></div>
<div class="a" style="left:248px;top:507px;width:6px;height:6px;border-radius:50%;border:1px solid #8a8a8a;background:radial-gradient(circle at 50% 40%,#eee,#bbb)"></div>
<div class="a" style="left:1px;top:878px;width:246px;height:15px;background:#f0f0f0"></div>
<div class="a" style="left:17px;top:879px;width:205px;height:13px;background:#cdcdcd"></div>
<svg style="left:4px;top:880px" width="10" height="10" viewBox="0 0 10 10"><path d="M7 1.5 L3 5 L7 8.5" fill="none" stroke="#555" stroke-width="1.5"/></svg>
<svg style="left:235px;top:880px" width="10" height="10" viewBox="0 0 10 10"><path d="M3 1.5 L7 5 L3 8.5" fill="none" stroke="#555" stroke-width="1.5"/></svg>



<!-- circle -->
<svg style="left:0;top:0" width="1330" height="932">
<defs><linearGradient id="fgrad" x1="0" y1="0" x2="0" y2="1"><stop offset="0" stop-color="#d0d0d0"/><stop offset="0.2" stop-color="#f6f6f6"/><stop offset="0.75" stop-color="#f0f0f0"/><stop offset="1" stop-color="#c4c4c4"/></linearGradient><filter id="sh" x="-10%" y="-10%" width="120%" height="120%"><feGaussianBlur stdDeviation="1.1"/></filter></defs>
<circle cx="679.2" cy="524.4" r="341.5" fill="none" stroke="#707070" stroke-width="5" filter="url(#sh)"/>
<circle cx="676.6" cy="521.4" r="342.5" fill="#bebebe" stroke="#000" stroke-width="1.3"/>
</svg>

<!-- sketch -->
<svg style="left:0;top:0" width="1330" height="932">
<g stroke="#000" stroke-width="1.3" fill="none"><path d="M613.5 449 V494 M613.5 521.6 V566 M601.5 494 H653 M601.5 521.6 H676"/><path d="M668 459.3 H710.5 M668 459.3 L671.2 472"/></g>
<path d="M610.5 477 L616.5 477 L613.5 494Z M610.5 539 L616.5 539 L613.5 521.6Z" fill="#000"/>
<path d="M668.3 471.8 L674.6 470.4 L675.5 482.6Z" fill="#000" stroke="#000" stroke-width="0.6"/>
<text x="603" y="513.5" font-family="Liberation Sans" font-size="19.5" fill="#000" letter-spacing="-0.5">20</text>
<text x="729" y="500" font-family="Liberation Sans" font-size="19.5" fill="#000">8</text>
<text x="738.5" y="466.2" font-family="Liberation Sans" font-size="19.5" fill="#000" letter-spacing="-0.5">10</text>
<circle cx="727" cy="459.5" r="6" fill="none" stroke="#000" stroke-width="1.2"/><path d="M721 468 L734 451" stroke="#000" stroke-width="1.2"/>
<circle cx="676.5" cy="494.6" r="6.8" fill="none" stroke="#000" stroke-width="2"/><path d="M672.5 494.6 h8 M676.5 490.6 v8" stroke="#000" stroke-width="1.1"/>
<circle cx="695.6" cy="502.5" r="6.8" fill="none" stroke="#0000ff" stroke-width="2"/><path d="M691.6 502.5 h8 M695.6 498.5 v8" stroke="#0000ff" stroke-width="1.1"/>
<circle cx="703.5" cy="521.6" r="6.8" fill="none" stroke="#0000ff" stroke-width="2"/><path d="M699.5 521.6 h8 M703.5 517.6 v8" stroke="#0000ff" stroke-width="1.1"/>
<circle cx="695.6" cy="540.7" r="6.8" fill="none" stroke="#0000ff" stroke-width="2"/><path d="M691.6 540.7 h8 M695.6 536.7 v8" stroke="#0000ff" stroke-width="1.1"/>
<circle cx="676.5" cy="548.6" r="6.8" fill="none" stroke="#0000ff" stroke-width="2"/><path d="M672.5 548.6 h8 M676.5 544.6 v8" stroke="#0000ff" stroke-width="1.1"/>
<circle cx="657.4" cy="540.7" r="6.8" fill="none" stroke="#0000ff" stroke-width="2"/><path d="M653.4 540.7 h8 M657.4 536.7 v8" stroke="#0000ff" stroke-width="1.1"/>
<circle cx="649.5" cy="521.6" r="6.8" fill="none" stroke="#0000ff" stroke-width="2"/><path d="M645.5 521.6 h8 M649.5 517.6 v8" stroke="#0000ff" stroke-width="1.1"/>
<circle cx="657.4" cy="502.5" r="6.8" fill="none" stroke="#0000ff" stroke-width="2"/><path d="M653.4 502.5 h8 M657.4 498.5 v8" stroke="#0000ff" stroke-width="1.1"/>
<path d="M676.5 521.6 V496" stroke="#ff0000" stroke-width="1.6"/><path d="M673.0 500 L676.5 492.5 L680.0 500Z" fill="#ff0000"/><path d="M676.5 521.6 H687" stroke="#ff0000" stroke-width="1.6"/><path d="M684.5 518 L693.2 521.6 L684.5 525Z" fill="#ff0000"/><circle cx="676.5" cy="521.6" r="2.8" fill="#ff0000"/><path d="M672.5 517.6 l8 8 M680.5 517.6 l-8 8" stroke="#ff0000" stroke-width="1" stroke-dasharray="1.5 1"/>
<rect x="672.0" y="481.3" width="12" height="11.5" fill="#00cc22"/><circle cx="678.0" cy="485.3" r="0.8" fill="#555"/><circle cx="680.5" cy="483.1" r="0.8" fill="#555"/><circle cx="673.8" cy="490.1" r="2" fill="#000"/><path d="M677.0 488.6 h7 M676.6 490.9 h7 M680.4 486.9 l-1.2 5.8 M683.0 486.9 l-1.2 5.8" stroke="#000" stroke-width="1.05"/><rect x="685.0" y="485.8" width="2.8" height="7" rx="1.4" fill="none" stroke="#000" stroke-width="1.6"/>
<rect x="691.1" y="489.2" width="12" height="11.5" fill="#00cc22"/><circle cx="697.1" cy="493.2" r="0.8" fill="#555"/><circle cx="699.6" cy="491.0" r="0.8" fill="#555"/><circle cx="692.9" cy="498.0" r="2" fill="#000"/><path d="M696.1 496.5 h7 M695.7 498.8 h7 M699.5 494.8 l-1.2 5.8 M702.1 494.8 l-1.2 5.8" stroke="#000" stroke-width="1.05"/><rect x="704.1" y="493.7" width="2.8" height="7" rx="1.4" fill="none" stroke="#000" stroke-width="1.6"/>
<rect x="699.0" y="508.3" width="12" height="11.5" fill="#00cc22"/><circle cx="705.0" cy="512.3" r="0.8" fill="#555"/><circle cx="707.5" cy="510.1" r="0.8" fill="#555"/><circle cx="700.8" cy="517.1" r="2" fill="#000"/><path d="M704.0 515.6 h7 M703.6 517.9 h7 M707.4 513.9 l-1.2 5.8 M710.0 513.9 l-1.2 5.8" stroke="#000" stroke-width="1.05"/><rect x="712.0" y="512.8" width="2.8" height="7" rx="1.4" fill="none" stroke="#000" stroke-width="1.6"/>
<rect x="691.1" y="527.4" width="12" height="11.5" fill="#00cc22"/><circle cx="697.1" cy="531.4" r="0.8" fill="#555"/><circle cx="699.6" cy="529.2" r="0.8" fill="#555"/><circle cx="692.9" cy="536.2" r="2" fill="#000"/><path d="M696.1 534.7 h7 M695.7 537.0 h7 M699.5 533.0 l-1.2 5.8 M702.1 533.0 l-1.2 5.8" stroke="#000" stroke-width="1.05"/><rect x="704.1" y="531.9" width="2.8" height="7" rx="1.4" fill="none" stroke="#000" stroke-width="1.6"/>
<rect x="672.5" y="536.6" width="12" height="11.5" fill="#00cc22"/><circle cx="678.5" cy="540.6" r="0.8" fill="#555"/><circle cx="681.0" cy="538.4" r="0.8" fill="#555"/><circle cx="674.3" cy="545.4" r="2" fill="#000"/><path d="M677.5 543.9 h7 M677.1 546.2 h7 M680.9 542.2 l-1.2 5.8 M683.5 542.2 l-1.2 5.8" stroke="#000" stroke-width="1.05"/><rect x="685.5" y="541.1" width="2.8" height="7" rx="1.4" fill="none" stroke="#000" stroke-width="1.6"/>
<rect x="652.9" y="527.4" width="12" height="11.5" fill="#00cc22"/><circle cx="658.9" cy="531.4" r="0.8" fill="#555"/><circle cx="661.4" cy="529.2" r="0.8" fill="#555"/><circle cx="654.7" cy="536.2" r="2" fill="#000"/><path d="M657.9 534.7 h7 M657.5 537.0 h7 M661.3 533.0 l-1.2 5.8 M663.9 533.0 l-1.2 5.8" stroke="#000" stroke-width="1.05"/><rect x="665.9" y="531.9" width="2.8" height="7" rx="1.4" fill="none" stroke="#000" stroke-width="1.6"/>
<rect x="645.0" y="508.3" width="12" height="11.5" fill="#00cc22"/><circle cx="651.0" cy="512.3" r="0.8" fill="#555"/><circle cx="653.5" cy="510.1" r="0.8" fill="#555"/><circle cx="646.8" cy="517.1" r="2" fill="#000"/><path d="M650.0 515.6 h7 M649.6 517.9 h7 M653.4 513.9 l-1.2 5.8 M656.0 513.9 l-1.2 5.8" stroke="#000" stroke-width="1.05"/><rect x="658.0" y="512.8" width="2.8" height="7" rx="1.4" fill="none" stroke="#000" stroke-width="1.6"/>
<rect x="652.9" y="489.2" width="12" height="11.5" fill="#00cc22"/><circle cx="658.9" cy="493.2" r="0.8" fill="#555"/><circle cx="661.4" cy="491.0" r="0.8" fill="#555"/><circle cx="654.7" cy="498.0" r="2" fill="#000"/><path d="M657.9 496.5 h7 M657.5 498.8 h7 M661.3 494.8 l-1.2 5.8 M663.9 494.8 l-1.2 5.8" stroke="#000" stroke-width="1.05"/><rect x="665.9" y="493.7" width="2.8" height="7" rx="1.4" fill="none" stroke="#000" stroke-width="1.6"/>
<rect x="685" y="502" width="11.5" height="11.5" fill="#00cc22"/><path d="M691 503.5 V512" stroke="#000" stroke-width="1.2"/>
<path d="M671 530 H679 V536 H684.5 V541 H671Z" fill="#00cc22"/><path d="M673 541 L683 530 M676.5 535 L682 540" stroke="#000" stroke-width="0.9"/><circle cx="677.5" cy="536.5" r="2.2" fill="#7ab8ff" stroke="#3a78c8" stroke-width="0.6"/>
</svg>
<!-- view toolbar -->
<svg style="left:0;top:0;width:0;height:0"><defs><radialGradient id="gl" cx="0.4" cy="0.35" r="0.7"><stop offset="0" stop-color="#fff"/><stop offset="1" stop-color="#c8c8c8"/></radialGradient><linearGradient id="cube" x1="0" y1="0" x2="1" y2="1"><stop offset="0" stop-color="#d6eaf5"/><stop offset="1" stop-color="#6aa8cc"/></linearGradient></defs></svg>
<svg style="left:612px;top:132px" width="20" height="20" viewBox="0 0 20 20"><path d="M2 17 L7 12" stroke="#5a9cc8" stroke-width="3.2" stroke-linecap="round"/><circle cx="11.5" cy="8" r="6.5" fill="url(#gl)" stroke="#888" stroke-width="1.1"/><path d="M11.5 3.5l-1.3 1.5h2.6zM11.5 12.5l-1.3-1.5h2.6zM7 8l1.5-1.3v2.6zM16 8l-1.5-1.3v2.6z" fill="#666"/></svg>
<svg style="left:637px;top:132px" width="20" height="20" viewBox="0 0 20 20"><path d="M2 17 L7 12" stroke="#5a9cc8" stroke-width="3.2" stroke-linecap="round"/><circle cx="11" cy="8.5" r="6" fill="url(#gl)" stroke="#999" stroke-width="1.1"/><path d="M7 1.5 H18.5 V13" fill="none" stroke="#666" stroke-width="1" stroke-dasharray="2 1.5"/></svg>
<svg style="left:664px;top:132px" width="20" height="20" viewBox="0 0 20 20"><path d="M3 11 L13 3 L17 7 L8 17 Z" fill="#e8e8e8" stroke="#888" stroke-width="1"/><path d="M13 3 L15 1 L19 5 L17 7" fill="#ddd" stroke="#888" stroke-width="1"/><ellipse cx="5" cy="14" rx="2.5" ry="3.5" transform="rotate(45 5 14)" fill="#bbb" stroke="#777"/><path d="M19 14 H11 M13 11 L10 14 L13 17" fill="none" stroke="#3a88c0" stroke-width="2"/></svg>
<svg style="left:690px;top:132px" width="20" height="20" viewBox="0 0 20 20"><path d="M1.5 5 Q10 0 18.5 5 V16 Q10 20 1.5 16 Z" fill="#ddd" stroke="#555" stroke-width="1"/><path d="M1.5 5 L6 6 V18 L1.5 16Z M18.5 5 L14 6 V18 L18.5 16Z" fill="#5a9cc8" stroke="#333" stroke-width="0.8"/><path d="M2.5 9 l3-2M2.5 12 l3-2M2.5 15l3-2M14.5 9l3-2M14.5 12l3-2M14.5 15l3-2" stroke="#cde" stroke-width="0.7"/><path d="M6 6 Q10 4 14 6 V18 Q10 16 6 18Z" fill="#eee" stroke="#666" stroke-width="0.8"/></svg>
<svg style="left:715px;top:132px" width="20" height="20" viewBox="0 0 20 20"><path d="M9 1 H15 L11 6 H14 L6 12 L9 7 H6Z" fill="#f5a623" stroke="#c07000" stroke-width="0.6"/><path d="M3 12 L12 6 L15 9 L7 17Z" fill="#e8e8e8" stroke="#888" stroke-width="1"/><ellipse cx="4.5" cy="15" rx="2" ry="3" transform="rotate(45 4.5 15)" fill="#bbb" stroke="#777"/><path d="M10 19 L14 9 L18 19 M11.5 15h5" fill="none" stroke="#3a88c0" stroke-width="1.5"/></svg>
<svg style="left:742px;top:132px" width="20" height="20" viewBox="0 0 20 20"><path d="M1.5 6 L6 1.5 H18.5 V14 L14 18.5 H1.5Z" fill="#fff" stroke="#555" stroke-width="1"/><rect x="1.5" y="6" width="12.5" height="12.5" fill="url(#cube)" stroke="#555" stroke-width="1"/><path d="M14 6 L18.5 1.5" stroke="#555" stroke-width="1"/><path d="M10 2v3M8.5 3.5l1.5 1.5 1.5-1.5M16 9v4M14.5 11h3" stroke="#555" stroke-width="0.8" fill="none"/></svg>
<div class="a" style="left:768px;top:140px;width:0;height:0;border-left:3.5px solid transparent;border-right:3.5px solid transparent;border-top:4px solid #999"></div>
<svg style="left:783px;top:132px" width="20" height="20" viewBox="0 0 20 20"><path d="M1.5 5 L8 1.5 L18 3.5 V15 L11 18.5 L1.5 16 Z" fill="#fff" stroke="#666" stroke-width="1"/><path d="M1.5 5 L11 7 V18.5 L1.5 16Z" fill="#8bbfe0" stroke="#666" stroke-width="0.9"/><path d="M11 7 L18 3.5" stroke="#666" stroke-width="0.9"/><path d="M1.5 5 L8 1.5 L18 3.5 L11 7Z" fill="#e8f3fa" stroke="#666" stroke-width="0.9"/><path d="M14 5 V17" stroke="#ddd" stroke-width="3"/></svg>
<div class="a" style="left:807px;top:140px;width:0;height:0;border-left:3.5px solid transparent;border-right:3.5px solid transparent;border-top:4px solid #999"></div>
<svg style="left:822px;top:132px" width="20" height="20" viewBox="0 0 20 20"><path d="M1 10 Q10 2 19 10 Q10 18 1 10Z" fill="#f4f4f4" stroke="#999" stroke-width="1"/><circle cx="10" cy="10" r="4.3" fill="#8a8a8a"/><circle cx="10" cy="10" r="2" fill="#444"/><path d="M10 2 V19" stroke="#555" stroke-width="1.1"/></svg>
<div class="a" style="left:848px;top:140px;width:0;height:0;border-left:3.5px solid transparent;border-right:3.5px solid transparent;border-top:4px solid #999"></div>
<svg style="left:862px;top:132px" width="20" height="20" viewBox="0 0 20 20"><circle cx="9" cy="8" r="7" fill="#ebebeb" stroke="#ddd" stroke-width="1"/><path d="M10 16 L17 7 L20 10 L12 18 L9 19Z" fill="#f2f2f2" stroke="#ccc" stroke-width="1"/></svg>
<svg style="left:887px;top:132px" width="20" height="20" viewBox="0 0 20 20"><circle cx="10" cy="8" r="7.5" fill="#e8322d"/><path d="M10 8 L2.5 7 A7.5 7.5 0 0 1 9 0.5Z" fill="#2f80d0"/><path d="M10 8 L2.5 8 A7.5 7.5 0 0 0 6 14.5Z" fill="#2fa84a"/><path d="M10 8 L6 14.5 A7.5 7.5 0 0 0 17 11Z" fill="#f2c40f"/><rect x="1" y="11" width="18" height="8" fill="#333"/><path d="M3 13h3v2H3zM9 13h3v2H9zM15 13h3v2h-3zM6 15h3v2H6zM12 15h3v2h-3z" fill="#fff"/><path d="M1 11 L19 11" stroke="#222"/></svg>
<div class="a" style="left:913px;top:140px;width:0;height:0;border-left:3.5px solid transparent;border-right:3.5px solid transparent;border-top:4px solid #999"></div>
<svg style="left:928px;top:132px" width="20" height="20" viewBox="0 0 20 20"><rect x="1.5" y="2.5" width="17" height="11" fill="#e0e0e0" stroke="#666" stroke-width="1.2"/><path d="M10 14 V17 M5 17.5 H15" stroke="#555" stroke-width="1.5"/></svg>
<div class="a" style="left:954px;top:140px;width:0;height:0;border-left:3.5px solid transparent;border-right:3.5px solid transparent;border-top:4px solid #999"></div>
<svg style="left:1199px;top:134px" width="12" height="15" viewBox="0 0 12 15"><rect x="0.5" y="0.5" width="11" height="14" fill="none" stroke="#888" stroke-width="1"/><path d="M7 4 L3.5 7.5 L7 11Z" fill="#888"/></svg>
<svg style="left:1225px;top:134px" width="12" height="15" viewBox="0 0 12 15"><rect x="0.5" y="0.5" width="11" height="14" fill="none" stroke="#888" stroke-width="1"/><path d="M5 4 L8.5 7.5 L5 11Z" fill="#888"/></svg>
<div class="a" style="left:1252px;top:145px;width:10px;height:2px;background:#888"></div>
<svg style="left:1276px;top:135px" width="14" height="13" viewBox="0 0 14 13"><rect x="0.5" y="4.5" width="8" height="7" fill="none" stroke="#888"/><path d="M3.5 4.5 V0.5 H12.5 V8.5 H8.5" fill="none" stroke="#888"/></svg>
<svg style="left:1303px;top:135px" width="12" height="12" viewBox="0 0 12 12"><path d="M1 1 L11 11 M11 1 L1 11" stroke="#888" stroke-width="1.3"/></svg>
<svg style="left:1225px;top:160px" width="44" height="38" viewBox="0 0 44 38"><path d="M1.5 1.5 H22 M1.5 1.5 V17 Q1.5 25.5 10 25.5 H22" fill="none" stroke="#cfe0e6" stroke-width="1.6"/><path d="M23 25.5 L32 16 L32 21 Q40 20.5 44.5 15 Q44 29 32 30.5 L32 35Z" fill="#e2eaf2" stroke="#c4cce2" stroke-width="1.4" stroke-linejoin="round"/></svg>
<svg style="left:1271px;top:192px" width="24" height="24" viewBox="0 0 24 24"><path d="M3.5 3.5 L20.5 20.5 M20.5 3.5 L3.5 20.5" stroke="#eed2d2" stroke-width="6.5" stroke-linecap="round"/></svg>
<div class="a" style="left:1303px;top:178px;width:26px;height:143px;background:#d4d4d4;border:1px solid #888;border-right:none"></div>
<div class="a" style="left:1304px;top:202px;width:25px;height:1px;background:#888"></div>
<div class="a" style="left:1304px;top:226px;width:25px;height:1px;background:#888"></div>
<div class="a" style="left:1304px;top:249px;width:25px;height:1px;background:#888"></div>
<div class="a" style="left:1304px;top:274px;width:25px;height:1px;background:#888"></div>
<div class="a" style="left:1304px;top:297px;width:25px;height:1px;background:#888"></div>
<div class="a" style="left:1304px;top:275px;width:25px;height:22px;background:#f7f7f7"></div>
<svg style="left:1305px;top:180px" width="22" height="20" viewBox="0 0 22 20"><path d="M2 10 L11 2 L20 10" fill="none" stroke="#2a6ea8" stroke-width="2.4"/><path d="M5 9 V19 H17 V9" fill="#fff" stroke="#333" stroke-width="1.2"/><rect x="10" y="13" width="3" height="6" fill="#fff" stroke="#333" stroke-width="0.9"/></svg>
<svg style="left:1305px;top:203px" width="22" height="21" viewBox="0 0 22 21"><path d="M4 5 L9 2 L18 4 V16 L13 19 L4 17Z" fill="#fff" stroke="#333" stroke-width="1.1"/><path d="M8 4 V18 M12 3.5 V18.5 M4 5 L13 7 L18 4 M13 7 V19" fill="none" stroke="#333" stroke-width="0.9"/></svg>
<svg style="left:1305px;top:227px" width="22" height="20" viewBox="0 0 22 20"><path d="M2 4 H8 L10 6 H18 V18 H2Z" fill="#e8e8e8" stroke="#333" stroke-width="1.1"/><path d="M2 18 L5 10 H21 L18 18Z" fill="#fafafa" stroke="#333" stroke-width="1.1"/></svg>
<svg style="left:1305px;top:250px" width="22" height="21" viewBox="0 0 22 21"><rect x="2" y="2" width="17" height="17" rx="1.5" fill="#fff" stroke="#333" stroke-width="1.1"/><path d="M4 5h8v3H9v5h3v3H4v-3h3V8H4z" fill="#f2c40f" stroke="#8a6a00" stroke-width="0.6"/><rect x="13" y="5" width="4" height="3" fill="#f2c40f"/><rect x="14" y="10" width="3" height="6" fill="#ccc" stroke="#555" stroke-width="0.6"/></svg>
<svg style="left:1305px;top:275px" width="22" height="21" viewBox="0 0 22 21"><circle cx="11" cy="10.5" r="8.5" fill="#e8322d" stroke="#8a5a20" stroke-width="0.6"/><path d="M11 10.5 L2.5 10 A8.5 8.5 0 0 1 10 2Z" fill="#2f80d0"/><path d="M11 10.5 L2.5 10.5 A8.5 8.5 0 0 0 7 18Z" fill="#2fa84a"/><path d="M11 10.5 L7 18 A8.5 8.5 0 0 0 19 13Z" fill="#e8b030"/><ellipse cx="8" cy="6" rx="3" ry="1.8" fill="#fff" opacity="0.5"/></svg>
<svg style="left:1305px;top:298px" width="22" height="22" viewBox="0 0 22 22"><rect x="2" y="2" width="18" height="18" rx="1" fill="#fff" stroke="#333" stroke-width="1.1"/><rect x="2.5" y="2.5" width="17" height="3" fill="#3a80c0"/><rect x="4" y="8" width="3" height="2" fill="#2f6fb0"/><rect x="4" y="12" width="3" height="2" fill="#2f6fb0"/><rect x="4" y="16" width="3" height="2" fill="#2f6fb0"/><path d="M8.5 9h9M8.5 13h9M8.5 17h9" stroke="#333" stroke-width="1"/></svg>

<svg style="left:276px;top:828px" width="52" height="50" viewBox="0 0 52 50"><path d="M12 9 H38" stroke="#7a2a10" stroke-width="4.4"/><path d="M12 9 H38" stroke="#e87070" stroke-width="2.2"/><path d="M34 4.5 L43 9 L34 13.5Z" fill="#d8302a" stroke="#6a1a10" stroke-width="0.8"/><path d="M11.5 10 V36" stroke="#1a1a8a" stroke-width="4"/><path d="M11.5 10 V36" stroke="#7070e0" stroke-width="1.8"/><path d="M7.5 33 L15.5 33 L11.5 41Z" fill="#2020c0" stroke="#101060" stroke-width="0.8"/><circle cx="11.5" cy="9" r="4.5" fill="#1e4a1e"/><path d="M11.5 5 V13" stroke="#3aa83a" stroke-width="1"/><path d="M44 5 L49 13 M49 5 L44 13" stroke="#ff1010" stroke-width="1.1" stroke-dasharray="2 0.8"/><path d="M8 41 H13 L8.5 48 H13.5" fill="none" stroke="#2020ff" stroke-width="1.1"/></svg>
<!-- bottom tabs -->
<div class="a" style="left:248px;top:893px;width:1080px;height:2px;background:#fff"></div>
<div class="a" style="left:1px;top:893px;width:246px;height:2px;background:#f7f7f7"></div>
<div class="a" style="left:1px;top:896px;width:1328px;height:15px;background:#f7f7f7"></div>
<div class="a" style="left:1px;top:895px;width:1327px;height:1px;background:#808080"></div>
<div class="a" style="left:1px;top:910px;width:1327px;height:1px;background:#808080"></div>
<div class="a" style="left:3px;top:894px;width:65px;height:16px;background:#bdbdbd;border-top:2px solid #222"></div>
<div class="a" style="left:18px;top:896px;width:1px;height:14px;background:#f7f7f7"></div>
<div class="a" style="left:34px;top:896px;width:1px;height:14px;background:#f7f7f7"></div>
<div class="a" style="left:50px;top:896px;width:1px;height:14px;background:#f7f7f7"></div>
<div class="a" style="left:66px;top:896px;width:1px;height:14px;background:#f7f7f7"></div>
<svg style="left:3px;top:896px" width="65" height="14" viewBox="0 0 65 14"><g fill="#999"><rect x="5" y="3" width="1.5" height="8"/><path d="M12 3 L7.5 7 L12 11Z"/><path d="M28 3 L23.5 7 L28 11Z"/><path d="M38 3 L42.5 7 L38 11Z"/><path d="M51 3 L55.5 7 L51 11Z"/><rect x="56" y="3" width="1.5" height="8"/></g></svg>
<div class="t" style="left:80px;top:896px;font-weight:bold;-webkit-text-stroke:0.12px currentColor;font-size:12px;letter-spacing:-0.3px">Model</div>
<div class="a" style="left:124px;top:895px;width:69px;height:16px;background:#d4d4d4;border:1px solid #808080;border-top:none"></div>
<div class="t" style="left:124px;top:896px;width:68px;text-align:center;font-size:12px;letter-spacing:-0.3px">3D Views</div>
<div class="a" style="left:192px;top:895px;width:109px;height:16px;background:#d4d4d4;border:1px solid #808080;border-top:none"></div>
<div class="t" style="left:203px;top:896px;font-size:12px;letter-spacing:-0.3px">Motion Study 1</div>
<div class="a" style="left:1px;top:911px;width:1328px;height:18px;background:#f7f7f7"></div>
<div class="t" style="left:2px;top:915px;font-size:12px;letter-spacing:-0.42px">SOLIDWORKS Premium 2017 x64 Edition</div>
<div class="t" style="left:727px;top:915px;font-size:12px;letter-spacing:-0.3px">-261.666mm</div>
<div class="t" style="left:811px;top:915px;font-size:12px;letter-spacing:-0.3px">230.925mm</div>
<div class="t" style="left:887px;top:915px;font-size:12px;letter-spacing:-0.3px">0mm</div>
<div class="t" style="left:935px;top:915px;font-size:12px;letter-spacing:-0.3px">Under Defined</div>
<div class="t" style="left:1029px;top:915px;font-size:12px;letter-spacing:-0.3px">Editing Sketch3</div>
<div class="t" style="left:1164px;top:915px;font-size:12px;letter-spacing:-0.3px">MMGS</div>
<div class="a" style="left:1018px;top:913px;width:1px;height:15px;background:#c8c8c8"></div>
<div class="a" style="left:1117px;top:913px;width:1px;height:15px;background:#c8c8c8"></div>
<div class="a" style="left:1133px;top:913px;width:1px;height:15px;background:#c8c8c8"></div>
<div class="a" style="left:1217px;top:918px;width:0;height:0;border-left:3px solid transparent;border-right:3px solid transparent;border-bottom:4px solid #333"></div>
<svg style="left:1290px;top:912px" width="18" height="16" viewBox="0 0 18 16"><path d="M3 5 L9 2 L16 6 L12 13 L3 9Z" fill="#fff" stroke="#333" stroke-width="1.3"/><path d="M4 7 L11 10 L14 6" fill="none" stroke="#333" stroke-width="1"/><path d="M2 9 L4 13 L11 15" fill="none" stroke="#777" stroke-width="1.5"/></svg>
<svg style="left:1318px;top:919px" width="9" height="9" viewBox="0 0 9 9"><g fill="#aaa"><rect x="6" y="0" width="2" height="2"/><rect x="3" y="3" width="2" height="2"/><rect x="6" y="3" width="2" height="2"/><rect x="0" y="6" width="2" height="2"/><rect x="3" y="6" width="2" height="2"/><rect x="6" y="6" width="2" height="2"/></g></svg>

</body></html>
